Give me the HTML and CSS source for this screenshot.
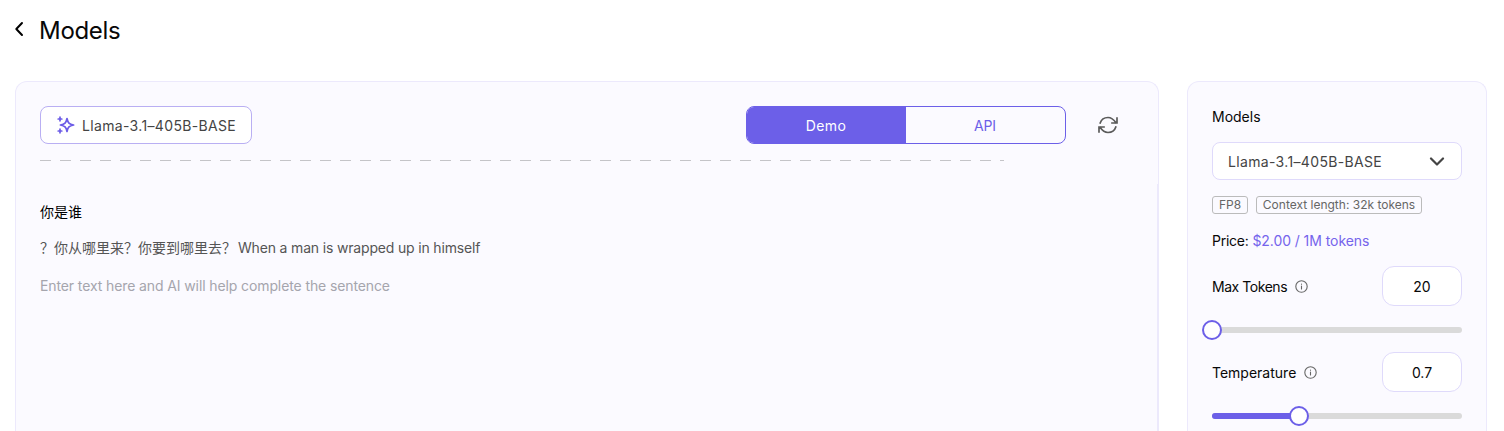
FILE: index.html
```html
<!DOCTYPE html>
<html lang="en">
<head>
<meta charset="utf-8">
<title>Models</title>
<link rel="stylesheet" href="styles.css">
</head>
<body>
<header class="page-header">
  <svg class="back" width="10" height="16" viewBox="0 0 10 16"><path d="M8 2 2.300 8 8 14"/></svg>
  <h1><span class="t-title">Models</span></h1>
</header>
<div class="layout">
  <main class="panel playground">
    <div class="toolbar">
      <div class="model-chip">
        <svg class="sparkle" width="18" height="18" viewBox="0 0 18 18"><path d="M10 2.500c.9 4.300 2.100 5.600 6.600 6.500-4.500.9-5.700 2.200-6.600 6.500C9.100 11.200 7.900 9.900 3.400 9c4.500-.9 5.700-2.200 6.600-6.500ZM3 1.200v3.600M1.200 3h3.600M3 13.200v3.600M1.200 15h3.600"/></svg>
        <span class="t-model">Llama-3.1–405B-BASE</span>
      </div>
      <div class="tabs">
        <div class="tab active"><span class="t-demo">Demo</span></div>
        <div class="tab"><span class="t-api">API</span></div>
      </div>
      <svg class="refresh" width="22" height="18" viewBox="0 0 22 18"><path d="M3.200 7C4.300 3.500 7.300 1.500 11 1.500c3.300 0 5.700 1.900 8 5.200M20 2V7h-5M18.800 11c-1.100 3.500-4.100 5.500-7.800 5.500-3.300 0-5.700-1.900-8-5.200M2 16V11h5"/></svg>
    </div>
    <div class="divider"></div>
    <div class="content">
      <p class="question">你是谁</p>
      <p class="answer"><span class="cjk">？你从哪里来？你要到哪里去？</span><span class="t-answer">When a man is wrapped up in himself</span></p>
      <p class="placeholder"><span class="t-placeholder">Enter text here and AI will help complete the sentence</span></p>
    </div>
  </main>
  <aside class="panel settings">
    <div class="label"><span class="t-label">Models</span></div>
    <div class="select"><span class="t-model">Llama-3.1–405B-BASE</span>
      <svg class="chevron" width="16" height="10" viewBox="0 0 16 10"><path d="m2 2.500 6 6 6-6"/></svg>
    </div>
    <div class="tags"><span class="tag fp">FP8</span><span class="tag context">Context length: 32k tokens</span></div>
    <div class="price"><span class="t-pricelabel">Price:</span> <span class="t-price">$2.00 / 1M tokens</span></div>
    <div class="setting">
      <span class="t-max">Max Tokens</span>
      <svg class="info" width="13" height="13" viewBox="0 0 13 13"><circle cx="6.500" cy="6.500" r="5.700"/><path d="M6.500 6v3M6.500 4v.2"/></svg>
      <div class="value">20</div>
    </div>
    <div class="slider"><div class="fill" style="width:0%"></div><div class="thumb" style="left:0%"></div></div>
    <div class="setting">
      <span class="t-temp">Temperature</span>
      <svg class="info" width="13" height="13" viewBox="0 0 13 13"><circle cx="6.500" cy="6.500" r="5.700"/><path d="M6.500 6v3M6.500 4v.2"/></svg>
      <div class="value">0.7</div>
    </div>
    <div class="slider"><div class="fill" style="width:34.8%"></div><div class="thumb" style="left:34.8%"></div></div>
  </aside>
</div>
</body>
</html>
```

FILE: styles.css
```css
* { box-sizing: border-box; }
body {
  margin: 0;
  height: 431px;
  overflow: hidden;
  background: #fff;
  color: #080808;
  font: 14px/20px Inter, "Noto Sans CJK SC", sans-serif;
  white-space: nowrap;
}
h1, p { margin: 0; }
svg { display: block; flex: none; fill: none; stroke-linecap: round; stroke-linejoin: round; }
.page-header { display: flex; align-items: center; height: 60px; padding-left: 14px; }
.back { margin-top: -2px; stroke: #000; stroke-width: 2; }
h1 { margin-left: 15px; padding-top: 2px; font-size: 24px; line-height: 32px; font-weight: 400; letter-spacing: -.3px; }
.layout { display: grid; grid-template-columns: 1144px 300px; gap: 28px; padding: 21px 0 0 15px; }
.panel { height: 350px; background: #fbfaff; border: 1px solid #ece9fc; border-bottom: 0; border-radius: 12px 12px 0 0; }
.playground { padding-top: 24px; }
.toolbar { display: flex; align-items: center; height: 38px; padding: 0 39px 0 24px; }
.model-chip {
  display: flex; align-items: center; gap: 7px;
  width: 212px; height: 38px; padding-left: 16px;
  background: #fff; border: 1px solid #b9aff3; border-radius: 8px; color: #444;
}
.t-model { padding-top: 2px; letter-spacing: .34px; }
.sparkle { stroke: #6c5ce7; stroke-width: 1.700; }
.tabs {
  display: flex; width: 320px; height: 38px; margin-left: auto; overflow: hidden;
  border: 1px solid #6c5fe8; border-radius: 8px; color: #6c5fe8;
}
.tab { display: flex; flex: 1; align-items: center; justify-content: center; padding: 2px 1px 0 0; }
.tab.active { background: #6c5fe8; color: #fff; }
.t-demo { letter-spacing: .4px; }
.t-api { letter-spacing: -.2px; }
.refresh { margin-left: 31px; stroke: #5a5a5a; stroke-width: 1.700; stroke-linecap: square; stroke-linejoin: miter; }
.divider {
  width: 964px; height: 1px; margin: 16px 0 0 24px;
  background: repeating-linear-gradient(90deg, #c4c4c8 0 11px, transparent 11px 20px);
}
.content { height: 247px; margin: 23px 0 0; padding: 18px 0 0 24px; border-right: 1px solid #ece9fc; }
.question { color: #000; }
.answer { display: flex; margin-top: 16px; color: #555; }
.cjk { width: 198px; }
.t-answer { letter-spacing: -.17px; }
.placeholder { margin-top: 18px; color: #a5a5ad; letter-spacing: -.11px; }
.settings { padding: 25px 24px 0; }
.label { height: 20px; }
.select {
  display: flex; align-items: center; justify-content: space-between;
  height: 38px; margin-top: 15px; padding: 0 16px 0 15px;
  background: #fff; border: 1px solid #dfdafb; border-radius: 8px; color: #444;
}
.chevron { stroke: #444; stroke-width: 2.200; }
.tags { display: flex; gap: 8px; margin-top: 16px; }
.tag {
  display: flex; align-items: center; justify-content: center;
  height: 18px; border: 1px solid #bbb; border-radius: 3px;
  color: #666; font-size: 12px; line-height: 16px;
}
.fp { width: 36px; }
.context { width: 166px; }
.price { height: 20px; margin-top: 17px; letter-spacing: -.07px; }
.t-pricelabel { letter-spacing: -.25px; }
.t-price { color: #7564ec; }
.setting { display: flex; align-items: center; height: 40px; margin-top: 15px; }
.t-max, .t-temp { padding-top: 2px; }
.t-max { letter-spacing: -.45px; }
.t-temp { letter-spacing: 0; }
.info { margin: 0 0 0 8px; stroke: #666; stroke-width: 1.100; }
.value {
  width: 80px; height: 40px; margin-left: auto;
  background: #fff; border: 1px solid #dfdafb; border-radius: 12px;
  line-height: 40px; text-align: center;
}
.slider { position: relative; height: 6px; margin: 21px 0 19px; background: #dadada; border-radius: 3px; }
.slider:last-child { margin-bottom: 0; }
.fill { height: 6px; background: #6c5fe8; border-radius: 3px; }
.thumb {
  position: absolute; top: -7px; width: 20px; height: 20px; margin-left: -10px;
  background: #fff; border: 2px solid #6c5fe8; border-radius: 50%;
}
```
